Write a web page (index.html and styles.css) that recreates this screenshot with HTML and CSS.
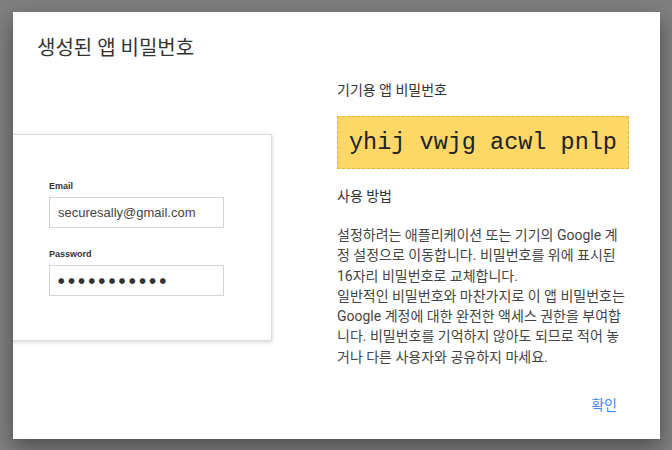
FILE: index.html
```html
<!DOCTYPE html>
<html lang="ko">
<head>
<meta charset="UTF-8">
<title>생성된 앱 비밀번호</title>
<link rel="stylesheet" href="styles.css">
</head>
<body>
<div class="dialog">
	<h1 class="title">생성된 앱 비밀번호</h1>
	<div class="body">
		<div class="left">
			<div class="card">
				<div class="label">Email</div>
				<div class="field">securesally@gmail.com</div>
				<div class="label label-pw">Password</div>
				<div class="field dots">●●●●●●●●●●●</div>
			</div>
		</div>
		<div class="right">
			<div class="heading">기기용 앱 비밀번호</div>
			<div class="code">yhij vwjg acwl pnlp</div>
			<div class="heading how">사용 방법</div>
			<p class="text">설정하려는 애플리케이션 또는 기기의 Google 계정 설정으로 이동합니다. 비밀번호를 위에 표시된 16자리 비밀번호로 교체합니다.<br>일반적인 비밀번호와 마찬가지로 이 앱 비밀번호는 Google 계정에 대한 완전한 액세스 권한을 부여합니다. 비밀번호를 기억하지 않아도 되므로 적어 놓거나 다른 사용자와 공유하지 마세요.</p>
		</div>
	</div>
	<div class="footer">
		<span class="btn">확인</span>
	</div>
</div>
</body>
</html>
```

FILE: styles.css
```css
* {
	margin: 0;
	padding: 0;
	box-sizing: border-box;
}

body {
	background: #7f7f7f;
	font-family: Roboto, "Noto Sans CJK KR", sans-serif;
	width: 672px;
	height: 450px;
	overflow: hidden;
}

.dialog {
	margin: 12px 0 0 13px;
	width: 647px;
	height: 427px;
	background: #fff;
	box-shadow: 0 8px 20px rgba(0, 0, 0, 0.4);
	display: flex;
	flex-direction: column;
	overflow: hidden;
}

.title {
	font-size: 20px;
	font-weight: normal;
	line-height: 28px;
	color: #333;
	padding: 22px 24px 0;
}

.body {
	display: flex;
	margin-top: 18px;
}

.left {
	width: 324px;
	flex: none;
}

.card {
	margin: 54px 0 0 -20px;
	width: 279px;
	height: 207px;
	border: 1px solid #ddd;
	box-shadow: 0 1px 4px rgba(0, 0, 0, 0.18);
	padding: 45px 0 0 55px;
	font-family: "Liberation Sans", Arial, sans-serif;
}

.label {
	font-size: 9px;
	font-weight: bold;
	color: #333;
	line-height: 12px;
}

.label-pw {
	margin-top: 20px;
}

.field {
	margin-top: 5px;
	width: 175px;
	height: 31px;
	border: 1px solid #d4d4d4;
	font-size: 13px;
	color: #444;
	line-height: 29px;
	padding-left: 8px;
}

.dots {
	font-size: 7.5px;
	letter-spacing: 3.6px;
	color: #333;
	font-family: "DejaVu Sans", sans-serif;
}

.right {
	width: 292px;
	flex: none;
}

.heading {
	font-size: 14px;
	line-height: 20px;
	color: #333;
}

.code {
	margin-top: 16px;
	height: 53px;
	background: #fed866;
	border: 1px dashed #e0b445;
	display: flex;
	align-items: center;
	justify-content: center;
	font-family: "Courier New", Courier, "Nimbus Mono PS", "Nimbus Mono L", FreeMono, "Liberation Mono", monospace;
	font-size: 23.5px;
	color: #222;
}

.how {
	margin-top: 17px;
}

.text {
	margin-top: 19px;
	font-size: 14px;
	line-height: 20.3px;
	color: #444;
}

.footer {
	margin-top: auto;
	display: flex;
	justify-content: flex-end;
	padding: 0 27px 16px;
}

.btn {
	font-size: 14px;
	line-height: 20px;
	padding: 8px 16px;
	color: #4285f4;
}
```
